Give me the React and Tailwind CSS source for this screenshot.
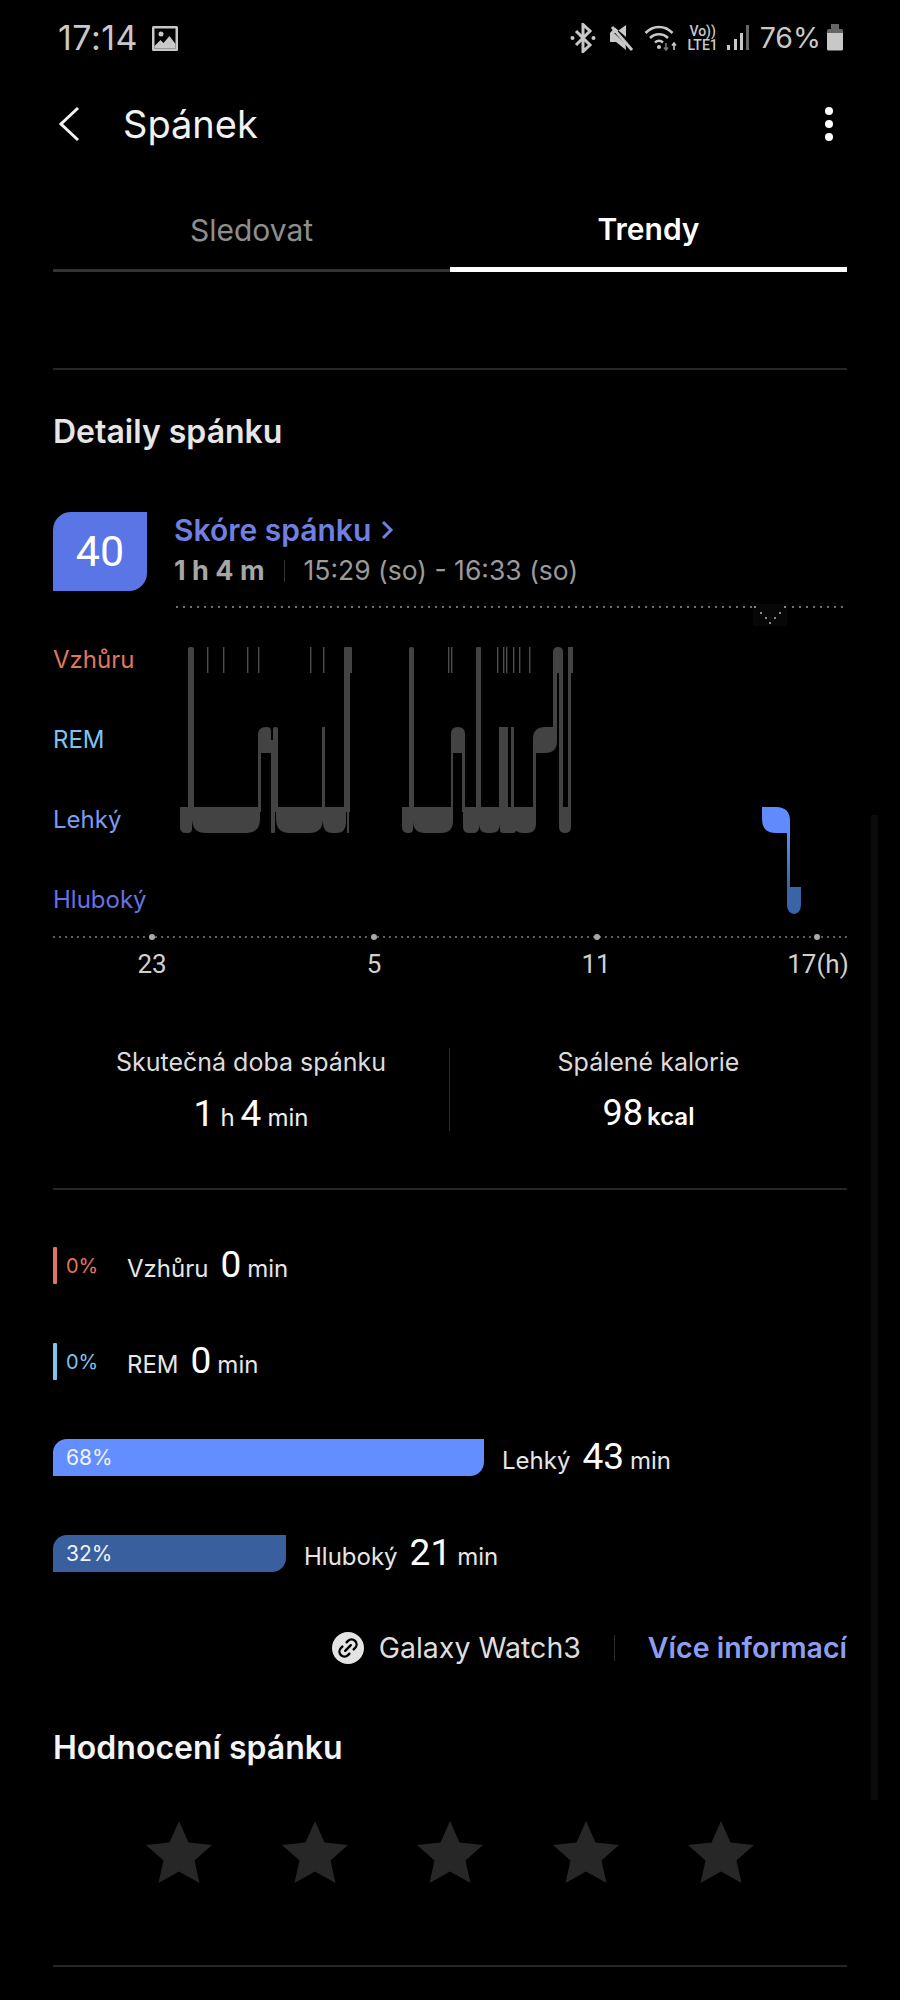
import React from 'react';
import { Link2 } from 'lucide-react';

const font = { fontFamily: 'Inter, "Liberation Sans", sans-serif' };
const digits = { fontFamily: 'Roboto, "Liberation Sans", sans-serif' };

// rounded box path, radii go tl tr br bl
function blob(x1, x2, y1, y2, tl = 0, tr = 0, br = 0, bl = 0) {
  return `M${x1 + tl} ${y1}H${x2 - tr}Q${x2} ${y1} ${x2} ${y1 + tr}V${y2 - br}Q${x2} ${y2} ${x2 - br} ${y2}H${x1 + bl}Q${x1} ${y2} ${x1} ${y2 - bl}V${y1 + tl}Q${x1} ${y1} ${x1 + tl} ${y1}Z`;
}

const AWAKE = [647, 673];
const REM = [727, 753];
const LIGHT = [807, 833];

const grayShapes = [
  // first cluster
  blob(188, 194, 647, 812, 2, 2),
  blob(180, 192, ...LIGHT, 0, 0, 4, 6),
  blob(192, 260, ...LIGHT, 0, 0, 14, 14),
  blob(258, 261, 740, 812),
  blob(258, 271, ...REM, 8, 4),
  blob(271, 275, 740, 833, 0, 0, 1, 1),
  blob(273, 278, ...REM, 2, 2),
  blob(275, 278, 750, 812),
  blob(276, 323, ...LIGHT, 0, 0, 14, 14),
  blob(322, 325, 727, 812),
  blob(323, 346, ...LIGHT, 0, 0, 10, 10),
  blob(344, 350, 673, 812),
  blob(344, 352, ...AWAKE, 1, 1),
  blob(347, 349, 800, 833),
  // second cluster
  blob(409, 414, 647, 812, 2, 2),
  blob(402, 413, ...LIGHT, 0, 0, 4, 6),
  blob(413, 453, ...LIGHT, 0, 0, 12, 12),
  blob(451, 453, 745, 812),
  blob(451, 465, ...REM, 7, 7),
  blob(462, 465, 745, 812),
  blob(463, 479, ...LIGHT, 0, 0, 6, 6),
  blob(476, 481, 647, 812, 1, 1),
  blob(479, 500, ...LIGHT, 0, 0, 9, 9),
  blob(499, 508, 727, 812),
  blob(500, 516, ...LIGHT, 0, 0, 3, 3),
  blob(511, 514, 727, 812),
  blob(514, 536, ...LIGHT, 0, 0, 9, 9),
  blob(533, 536, 745, 812),
  blob(533, 557, ...REM, 12, 0, 12, 0),
  blob(553, 557, 665, 735),
  blob(553, 563, ...AWAKE, 5, 5),
  blob(559, 563, 670, 812),
  blob(559, 571, ...LIGHT, 0, 0, 6, 6),
  blob(568, 573, ...AWAKE),
  blob(568, 571, 670, 812),
];

const awakeTicks = [207, 223, 247, 258, 310, 323, 448, 451, 497, 503, 506, 513, 519, 529];

function SleepChart() {
  return (
    <svg className="flex-1 h-full" viewBox="173 619 674 316" fill="none">
      <defs>
        <linearGradient id="stem" x1="0" y1="833" x2="0" y2="887" gradientUnits="userSpaceOnUse">
          <stop offset="0" stopColor="#5f8bff" />
          <stop offset="1" stopColor="#3a64a8" />
        </linearGradient>
      </defs>
      {awakeTicks.map((x) => (
        <rect key={x} x={x} y="647" width="1.4" height="26" fill="#4d4d4d" />
      ))}
      {grayShapes.map((d, i) => (
        <path key={i} d={d} fill="#434343" />
      ))}
      <path d={blob(762, 790, 807, 833, 0, 14, 0, 14)} fill="#5f8bff" />
      <rect x="787" y="832" width="3" height="56" fill="url(#stem)" />
      <path d={blob(787, 801, 887, 914, 0, 0, 9, 9)} fill="#3a64a8" />
    </svg>
  );
}

function StatusIcons() {
  return (
    <div className="flex items-center text-[#c8c8c8]">
      {/* bluetooth */}
      <svg width="26" height="30" viewBox="0 0 26 30" fill="none" stroke="currentColor" strokeWidth="3">
        <path d="M6 8l14 14-7 6.500V1.500L20 8 6 22" />
        <circle cx="2.500" cy="15" r="2" fill="currentColor" stroke="none" />
        <circle cx="23.500" cy="15" r="2" fill="currentColor" stroke="none" />
      </svg>
      {/* mute */}
      <svg className="ml-[13px]" width="26" height="28" viewBox="0 0 26 28" fill="currentColor">
        <path d="M1 9h5L17 1v12L6 3.500 1 9zM1 9v9h6l10 8-.5-6L5 9z" />
        <path d="M3 3l20 23" stroke="currentColor" strokeWidth="3" />
      </svg>
      {/* wifi */}
      <svg className="ml-[9px]" width="35" height="28" viewBox="0 0 35 28" fill="none" stroke="currentColor" strokeWidth="2.600">
        <path d="M1.500 9C9 1 21 1 28.500 9" />
        <path d="M6 14c5-5 13-5 18 0" />
        <path d="M11 18.500c2.500-2.200 5.500-2.200 8 0" />
        <circle cx="15" cy="23" r="2" fill="currentColor" stroke="none" />
        <path d="M22 19v7M20 23.500l2 2.500 2-2.500" stroke="#777" strokeWidth="1.600" />
        <path d="M30 26v-7M28 21.500l2-2.500 2 2.500" strokeWidth="1.600" />
      </svg>
      {/* volte */}
      <div className="ml-[7px] w-[34px] flex flex-col items-center text-[14px] leading-[14px] font-medium" style={digits}>
        <span>Vo))</span>
        <span>LTE1</span>
      </div>
      {/* signal */}
      <svg className="ml-[6px]" width="24" height="28" viewBox="0 0 24 28" fill="currentColor">
        <rect x="1" y="21" width="3" height="5" />
        <rect x="8" y="15" width="3" height="11" />
        <rect x="14" y="9" width="3" height="17" />
        <rect x="20" y="1" width="3" height="25" fill="#666" />
      </svg>
      <span className="ml-[10px] text-[28.500px] leading-none">76%</span>
      {/* battery */}
      <svg className="ml-[5px]" width="18" height="28" viewBox="0 0 18 28">
        <rect x="5" y="0" width="8" height="5" fill="#666" />
        <rect x="1" y="5" width="16" height="8" rx="1.500" fill="#666" />
        <path d="M1 9h16v16q0 1.500-1.500 1.500h-13Q1 26.500 1 25z" fill="#c8c8c8" />
      </svg>
    </div>
  );
}

function StageRow({ pct, color, width, label, value, pctColor }) {
  const thin = width < 10;
  return (
    <div className="flex items-center h-[37px]">
      {thin ? (
        <>
          <div className="h-full w-[4px] rounded-[1px]" style={{ background: color }} />
          <span className="ml-[9px] w-[61px] text-[20px]" style={{ color: pctColor }}>{pct}</span>
        </>
      ) : (
        <div
          className="h-full flex items-center pl-[13px] text-[21px] text-[#f2f2f2] rounded-tl-[14px] rounded-br-[14px]"
          style={{ background: color, width }}
        >
          {pct}
        </div>
      )}
      <div className={`flex items-baseline pt-[2px] text-[#e6e6e6] ${thin ? '' : 'ml-[18px]'}`}>
        <span className="text-[24px]">{label}</span>
        <span className="ml-[12px] text-[37px] leading-none text-white" style={digits}>{value}</span>
        <span className="ml-[6px] text-[24px]">min</span>
      </div>
    </div>
  );
}

function Star() {
  return (
    <svg width="68" height="62" viewBox="0 0 68 62" fill="#272727">
      <path d="M34 0l9.500 21.500L67 24 49.500 39.500 54.500 62 34 50.500 13.500 62 18.500 39.500 1 24l23.500-2.500z" />
    </svg>
  );
}

export default function App() {
  return (
    <div className="relative w-[900px] h-[2000px] overflow-hidden bg-black text-white" style={font}>
      {/* scrollbar */}
      <div className="absolute left-[871px] top-[815px] w-[7px] h-[985px] bg-[#0b0b0b]" />

      {/* status bar */}
      <div className="h-[76px] flex items-center justify-between pl-[58px] pr-[56px]">
        <div className="flex items-center text-[#c8c8c8]">
          <span className="text-[34px] leading-none tracking-[0.5px]">17:14</span>
          <svg className="ml-[14px]" width="26" height="25" viewBox="0 0 26 25">
            <rect width="26" height="25" rx="1.500" fill="#c8c8c8" />
            <rect x="2.500" y="2.500" width="21" height="20" fill="#000" />
            <circle cx="9" cy="8" r="2.500" fill="#c8c8c8" />
            <path d="M2.500 20l6-6 3 3 6-7 6 8v4.500h-21z" fill="#c8c8c8" />
          </svg>
        </div>
        <StatusIcons />
      </div>

      {/* header */}
      <div className="h-[96px] flex items-center justify-between pl-[58px] pr-[67px]">
        <div className="flex items-center">
          <svg width="22" height="36" viewBox="0 0 22 36" fill="none" stroke="#f2f2f2" strokeWidth="3">
            <path d="M20 2L3 18l17 16" />
          </svg>
          <span className="ml-[43px] text-[38px] text-[#f2f2f2]">Spánek</span>
        </div>
        <div className="flex flex-col gap-[5px]">
          <div className="w-[8px] h-[8px] rounded-full bg-white" />
          <div className="w-[8px] h-[8px] rounded-full bg-white" />
          <div className="w-[8px] h-[8px] rounded-full bg-white" />
        </div>
      </div>

      <div className="px-[53px]">
        {/* tabs */}
        <div className="grid grid-cols-2">
          <div className="h-[100px] pt-[20px] flex items-center justify-center text-[30px] text-[#8e8e8e] border-b-[3px] border-[#333]">
            Sledovat
          </div>
          <div className="h-[100px] pt-[20px] flex items-center justify-center text-[30px] font-semibold border-b-[5px] border-white">
            Trendy
          </div>
        </div>

        <div className="mt-[96px] h-[2px] bg-[#262626]" />

        <div className="mt-[42px] h-[40px] flex items-center text-[32px] font-semibold text-[#e6e6e6]">Detaily spánku</div>

        {/* score */}
        <div className="mt-[60px] flex">
          <div className="w-[94px] h-[79px] flex items-center justify-center bg-[#5a75e6] text-[43px] rounded-tl-[18px] rounded-br-[18px]" style={digits}>
            40
          </div>
          <div className="ml-[27px]">
            <div className="h-[36px] flex items-center text-[#6f80e2] text-[30px] font-semibold">
              Skóre spánku
              <svg className="ml-[10px]" width="13" height="20" viewBox="0 0 13 20" fill="none" stroke="currentColor" strokeWidth="3">
                <path d="M2 2l8 8-8 8" />
              </svg>
            </div>
            <div className="mt-[5px] h-[36px] flex items-center text-[26.500px] text-[#9a9a9a]">
              <span className="font-bold text-[#a6a6a6] text-[27px]">1 h 4 m</span>
              <div className="mx-[19px] w-[1px] h-[22px] bg-[#333]" />
              <span>15:29 (so) - 16:33 (so)</span>
            </div>
          </div>
        </div>

        {/* dotted range line */}
        <div className="relative mt-[15px] ml-[123px] w-[670px] h-[2px] bg-[repeating-linear-gradient(90deg,#6e6e6e_0_2px,transparent_2px_7px)]">
          <svg className="absolute left-[577px] top-[-2px]" width="34" height="22" viewBox="0 0 34 22">
            <rect width="34" height="22" fill="#070707" />
            <g fill="#888">
              <rect x="1" y="2" width="2" height="2" />
              <rect x="7" y="8" width="2" height="2" />
              <rect x="12" y="13" width="2" height="2" />
              <rect x="16" y="18" width="2" height="2" />
              <rect x="21" y="13" width="2" height="2" />
              <rect x="26" y="8" width="2" height="2" />
              <rect x="31" y="2" width="2" height="2" />
            </g>
          </svg>
        </div>

        {/* chart */}
        <div className="mt-[11px] h-[316px] flex">
          <div className="w-[120px] flex flex-col text-[24px]">
            <div className="h-[80px] flex items-center pt-[1px] text-[#e2755f]">Vzhůru</div>
            <div className="h-[80px] flex items-center pt-[1px] text-[#7fc3ee]">REM</div>
            <div className="h-[80px] flex items-center pt-[2px] text-[#7b9cf2]">Lehký</div>
            <div className="h-[76px] flex items-start pt-[29px] leading-none text-[#6a70e4]">Hluboký</div>
          </div>
          <SleepChart />
        </div>

        {/* axis */}
        <div className="relative mt-[1px] h-[2px] bg-[repeating-linear-gradient(90deg,#5e5e5e_0_2px,transparent_2px_6px)]">
          <div className="absolute left-[96px] top-[-2px] w-[6px] h-[6px] rounded-full bg-[#aaa]" />
          <div className="absolute left-[318px] top-[-2px] w-[6px] h-[6px] rounded-full bg-[#aaa]" />
          <div className="absolute left-[541px] top-[-2px] w-[6px] h-[6px] rounded-full bg-[#aaa]" />
          <div className="absolute left-[761px] top-[-2px] w-[6px] h-[6px] rounded-full bg-[#aaa]" />
        </div>
        <div className="mt-[11px] -ml-3 w-[888px] h-[30px] grid grid-cols-4 text-[26px] text-[#d0d0d0] text-center leading-[30px]" style={digits}>
          <span>23</span>
          <span>5</span>
          <span>11</span>
          <span>17(h)</span>
        </div>

        {/* totals */}
        <div className="mt-[69px] h-[83px] grid grid-cols-2">
          <div className="flex flex-col items-center border-r border-[#2c2c2c]">
            <div className="h-[28px] pt-[2px] flex items-center text-[25px] text-[#dcdcdc]">Skutečná doba spánku</div>
            <div className="mt-[19px] h-[36px] flex items-baseline text-[#eeeeee] text-[24px]">
              <span className="text-[37px] leading-none text-white" style={digits}>1</span>
              <span className="ml-[6px]">h</span>
              <span className="ml-[6px] text-[37px] leading-none text-white" style={digits}>4</span>
              <span className="ml-[6px]">min</span>
            </div>
          </div>
          <div className="flex flex-col items-center">
            <div className="h-[28px] pt-[2px] flex items-center text-[25px] text-[#dcdcdc]">Spálené kalorie</div>
            <div className="mt-[19px] h-[36px] flex items-baseline text-[24px] font-semibold">
              <span className="text-[36px] leading-none font-normal" style={digits}>98</span>
              <span className="ml-[4px]">kcal</span>
            </div>
          </div>
        </div>

        <div className="mt-[57px] h-[2px] bg-[#262626]" />

        {/* stages */}
        <div className="mt-[57px] flex flex-col gap-[59px]">
          <StageRow pct="0%" color="#e2755f" pctColor="#e2755f" width={4} label="Vzhůru" value="0" />
          <StageRow pct="0%" color="#7fc3ee" pctColor="#7fc3ee" width={4} label="REM" value="0" />
          <StageRow pct="68%" color="#628eff" width={431} label="Lehký" value="43" />
          <StageRow pct="32%" color="#3a5f9f" width={233} label="Hluboký" value="21" />
        </div>

        {/* source */}
        <div className="mt-[56px] h-[40px] flex items-center justify-end">
          <div className="w-[32px] h-[32px] rounded-full bg-[#e4e4e4] flex items-center justify-center">
            <Link2 className="w-[24px] h-[24px] text-black -rotate-45" strokeWidth={2.400} />
          </div>
          <span className="ml-[15px] text-[28.500px] text-[#dedede]">Galaxy Watch3</span>
          <div className="mx-[33px] w-[1px] h-[26px] bg-[#2a2a2a]" />
          <span className="text-[28.500px] font-semibold text-[#8d9ef0]">Více informací</span>
        </div>

        <div className="mt-[60px] h-[40px] flex items-center text-[32px] font-semibold text-[#f4f4f4]">Hodnocení spánku</div>

        <div className="mt-[53px] flex justify-center gap-[67.500px]">
          <Star />
          <Star />
          <Star />
          <Star />
          <Star />
        </div>

        <div className="mt-[82px] h-[2px] bg-[#262626]" />
      </div>
    </div>
  );
}
